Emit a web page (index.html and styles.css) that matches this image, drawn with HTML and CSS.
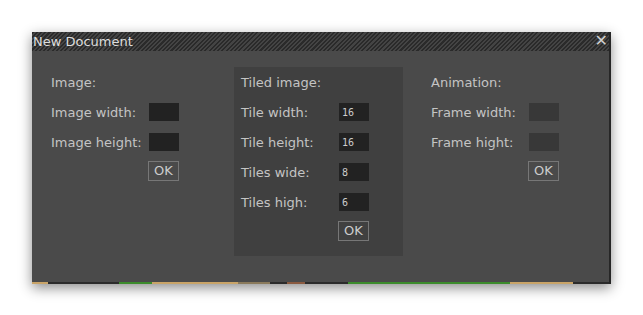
FILE: index.html
```html
<html>
    <head>
        <meta name="viewport" content="width=device-width, initial-scale=1">
        <title>New Document</title>
        <link rel="stylesheet" href="styles.css">
    </head>
    <body>
        <div class="dialog">
            <div class="title-bar">
                <span class="title">New Document</span>
                <span class="close">&#x2715;</span>
            </div>
            <div class="dialog-body">
                <div class="col col-image">
                    <div class="row head">Image:</div>
                    <div class="row"><span class="label">Image width:</span><input class="field" type="text"></div>
                    <div class="row"><span class="label">Image height:</span><input class="field" type="text"></div>
                    <div class="row ok-row"><button type="button" class="ok">OK</button></div>
                </div>
                <div class="col col-tiled">
                    <div class="row head">Tiled image:</div>
                    <div class="row"><span class="label">Tile width:</span><input class="field" type="text" value="16"></div>
                    <div class="row"><span class="label">Tile height:</span><input class="field" type="text" value="16"></div>
                    <div class="row"><span class="label">Tiles wide:</span><input class="field" type="text" value="8"></div>
                    <div class="row"><span class="label">Tiles high:</span><input class="field" type="text" value="6"></div>
                    <div class="row ok-row"><button type="button" class="ok">OK</button></div>
                </div>
                <div class="col col-anim">
                    <div class="row head">Animation:</div>
                    <div class="row"><span class="label">Frame width:</span><input class="field" type="text"></div>
                    <div class="row"><span class="label">Frame hight:</span><input class="field" type="text"></div>
                    <div class="row ok-row"><button type="button" class="ok">OK</button></div>
                </div>
            </div>
            <div class="task-strip"></div>
        </div>
    </body>
</html>
```

FILE: styles.css
```css
body {
    margin: 0;
    background: #fff;
    font-family: "DejaVu Sans", Verdana, sans-serif;
}
.dialog {
    margin: 32px 0 0 32px;
    width: 579px;
    box-shadow: 0 4px 12px rgba(0, 0, 0, 0.45);
    border-right: 2px solid #262626;
    box-sizing: border-box;
}
.title-bar {
    height: 19px;
    display: flex;
    align-items: center;
    justify-content: space-between;
    background: repeating-linear-gradient(-45deg, #2a2a2a 0 1.5px, #444 1.5px 3px);
    color: #ddd;
    font-size: 13px;
}
.title {
    padding-left: 1px;
}
.close {
    font-size: 16px;
    line-height: 16px;
    font-weight: 700;
    color: #d0d0d0;
    padding: 0 1px 2px 0;
}
.dialog-body {
    background: #4a4a4a;
    height: 231px;
    padding: 16px 0 0 19px;
    box-sizing: border-box;
    display: flex;
    align-items: flex-start;
    color: #c4c4c4;
    font-size: 13px;
}
.col {
    display: flex;
    flex-direction: column;
}
.col-image {
    width: 183px;
}
.col-tiled {
    width: 169px;
    padding: 0 0 9px 7px;
    box-sizing: border-box;
    background: #404040;
    margin-right: 28px;
}
.row {
    height: 30px;
    width: 128px;
    display: flex;
    align-items: center;
}
.head {
    padding-top: 1px;
    box-sizing: border-box;
}
.label {
    width: 98px;
}
.field {
    width: 30px;
    height: 18px;
    border: none;
    margin: 0;
    padding: 0 0 0 3px;
    box-sizing: border-box;
    background: #222;
    color: #ccc;
    font-family: "DejaVu Sans Mono", monospace;
    font-size: 10px;
    outline: none;
}
.col-anim .field {
    background: #383838;
}
.ok-row {
    justify-content: flex-end;
    padding-bottom: 3px;
    box-sizing: border-box;
}
.ok {
    width: 31px;
    height: 20px;
    padding: 0;
    background: transparent;
    border: 1px solid #777;
    color: #ccc;
    font-family: "DejaVu Sans", Verdana, sans-serif;
    font-size: 13px;
}
.task-strip {
    height: 2px;
    background: linear-gradient(to right,
        #c9a468 0 16px, #2b2b2b 16px 87px, #3c8c2c 87px 120px,
        #c9a468 120px 206px, #8a7a5c 206px 238px, #2b2b2b 238px 255px,
        #8a5a40 255px 273px, #2b2b2b 273px 316px, #3c8c2c 316px 478px,
        #c9a468 478px 541px, #2b2b2b 541px);
}
```
